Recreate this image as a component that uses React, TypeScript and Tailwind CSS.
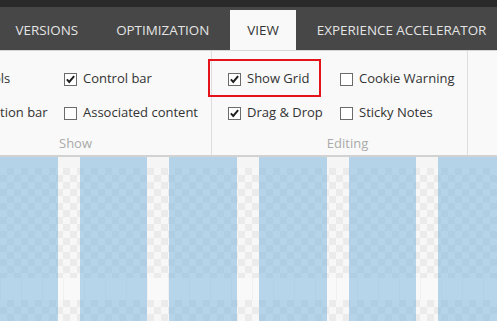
import React from "react";

const tabs = ["VERSIONS", "OPTIMIZATION", "VIEW", "EXPERIENCE ACCELERATOR"];

function Check({ on }: { on?: boolean }) {
  return (
    <span className="flex h-[13px] w-[13px] shrink-0 items-center justify-center border border-[#6b6b6b] bg-white">
      {on && (
        <svg viewBox="0 0 13 13" className="h-[13px] w-[13px]">
          <path d="M2.2 6.4 5 9.4 10.8 2.4" fill="none" stroke="#1e1e1e" strokeWidth="2.3" />
        </svg>
      )}
    </span>
  );
}

function Item({ label, on }: { label: string; on?: boolean }) {
  return (
    <div className="flex h-[20px] items-center gap-[6px] whitespace-nowrap text-[13px] text-[#333]">
      <Check on={on} />
      <span>{label}</span>
    </div>
  );
}

function Group({
  title,
  className,
  cols,
  children,
}: {
  title: string;
  className: string;
  cols: { w?: string; items: { label: string; on?: boolean }[] }[];
  children?: React.ReactNode;
}) {
  return (
    <div className={"relative flex shrink-0 flex-col border-r border-[#dedede] " + className}>
      <div className="flex pt-[18px]">
        {cols.map((c, i) => (
          <div key={i} className={"flex shrink-0 flex-col gap-[14px] " + (c.w ?? "")}>
            {c.items.map((it) => (
              <Item key={it.label} label={it.label} on={it.on} />
            ))}
          </div>
        ))}
      </div>
      <div className="mt-auto mb-[3px] text-center text-[13px] leading-[18px] text-[#aaaaaa]">{title}</div>
      {children}
    </div>
  );
}

export default function App() {
  return (
    <div className="flex h-[321px] w-[497px] flex-col overflow-hidden bg-[#f5f5f5] font-['Open_Sans',sans-serif]">
      <div className="h-[7px] shrink-0 bg-[#2a2a2a]" />

      <div className="flex h-[43px] shrink-0 items-end gap-[3px] bg-[#474747]">
        {tabs.map((t, i) => (
          <div
            key={t}
            className={
              "flex h-[40px] items-center whitespace-nowrap px-[17.5px] text-[13.4px] " +
              (i === 0 ? "ml-[-2px] " : "") +
              (t === "VIEW" ? "bg-[#f9f9f9] text-[#333]" : "text-[#e4e4e4]")
            }
          >
            {t}
          </div>
        ))}
      </div>

      <div className="h-px shrink-0 bg-[#d6d6d6]" />

      <div className="relative flex h-[106px] shrink-0 overflow-hidden border-b-2 border-[#d2d2d2] bg-[#f9f9f9]">
        <Group
          title="Show"
          className="ml-[-74px] w-[286px] pl-[14px]"
          cols={[
            { w: "w-[124px]", items: [{ label: "Controls", on: true }, { label: "Navigation bar", on: true }] },
            { items: [{ label: "Control bar", on: true }, { label: "Associated content" }] },
          ]}
        />
        <Group
          title="Editing"
          className="w-[256px] pl-[16px]"
          cols={[
            { w: "w-[112px]", items: [{ label: "Show Grid", on: true }, { label: "Drag & Drop", on: true }] },
            { items: [{ label: "Cookie Warning" }, { label: "Sticky Notes" }] },
          ]}
        >
          <div className="absolute left-[-4px] top-[8px] h-[38px] w-[113px] border-2 border-[#e3121b]" />
          <div className="absolute bottom-[-2px] left-[144px] h-[2px] w-[5px] bg-[#9a9a9a]" />
        </Group>
      </div>

      <div className="relative flex-1">
        <div className="flex h-full flex-col">
          <div className="h-[11px] shrink-0" />
          <div className="h-[110px] shrink-0 bg-[conic-gradient(#ebebeb_25%,#f7f7f7_0_50%,#ebebeb_0_75%,#f7f7f7_0)] bg-[length:14px_14px]" />
          <div className="h-[22px] shrink-0 bg-[#f9f9f9] bg-[repeating-linear-gradient(90deg,#f0f0f0_0_1px,transparent_1px_21px)]" />
          <div className="flex-1 bg-[conic-gradient(#ebebeb_25%,#f7f7f7_0_50%,#ebebeb_0_75%,#f7f7f7_0)] bg-[length:14px_14px]" />
        </div>
        <div className="absolute inset-0 ml-[-10px] flex gap-[22px]">
          {[0, 1, 2, 3, 4, 5].map((i) => (
            <div key={i} className="h-full w-[67.7px] shrink-0 bg-[rgba(120,180,222,0.52)]" />
          ))}
        </div>
      </div>
    </div>
  );
}
